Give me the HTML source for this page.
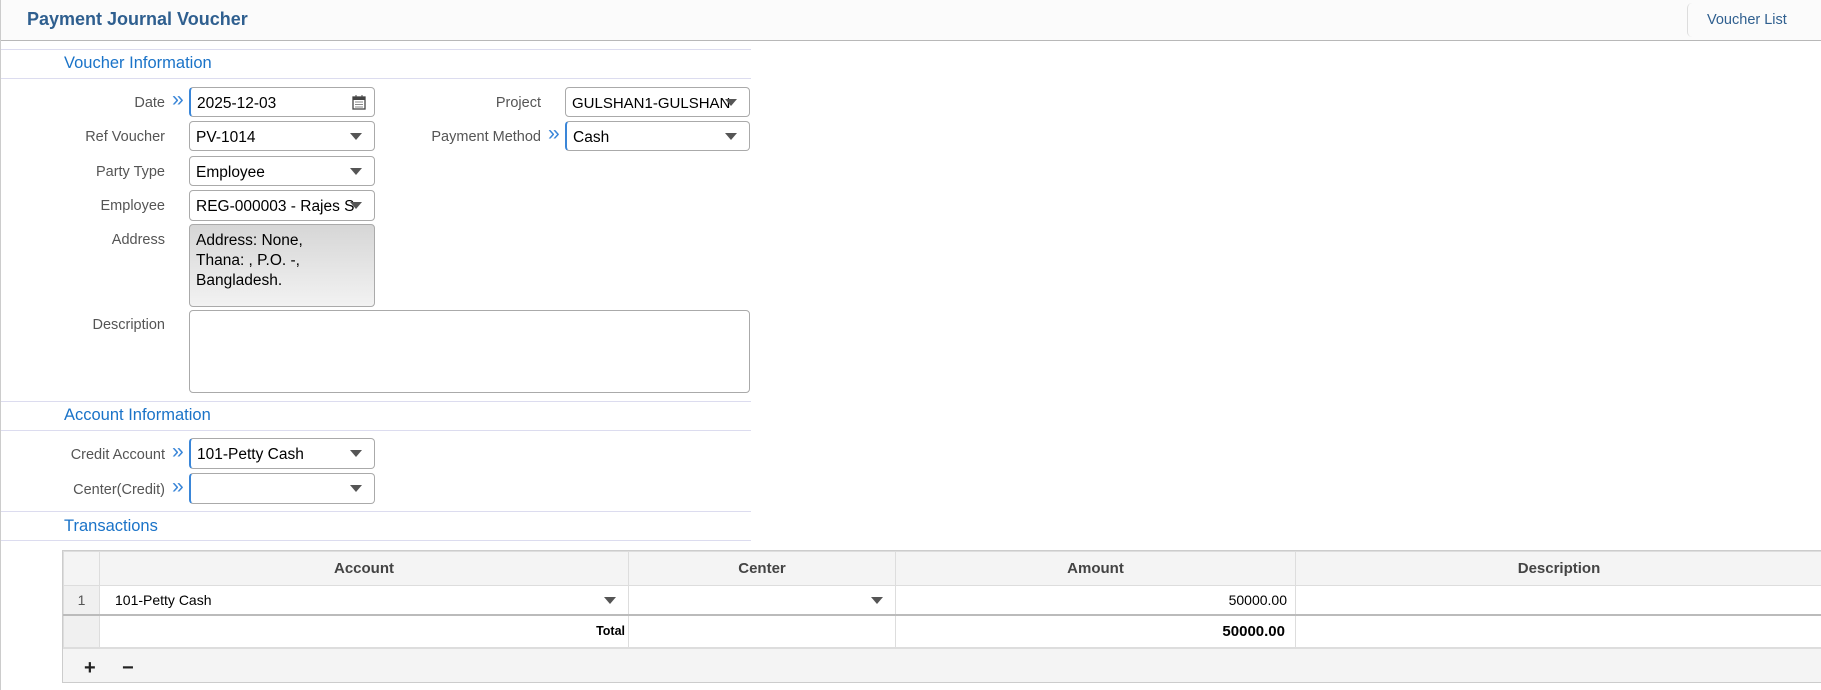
<!DOCTYPE html>
<html><head><meta charset="utf-8"><style>
*{box-sizing:border-box;margin:0;padding:0}
body{width:1821px;height:690px;background:#fff;font-family:"Liberation Sans",sans-serif;position:relative;overflow:hidden;border-left:1px solid #ccc}
.a{position:absolute}
.hdr{left:0;top:0;width:1821px;height:41px;background:#fbfbfb;border-bottom:1px solid #b8b8b8}
.title{left:26px;top:9px;font-size:18px;font-weight:bold;color:#2f5f8f}
.vl{left:1686px;top:3px;width:140px;height:34px;border-left:1px solid #ddd;border-radius:5px 0 0 5px;font-size:14.5px;color:#2f5f8f;padding:9px 0 0 19px}
.line{left:0;width:750px;height:1px;background:#dcdcef}
.sec{left:63px;font-size:16.5px;color:#1a73c8}
.lbl{font-size:14.5px;color:#555;text-align:right;width:160px;left:4px}
.arr{font-size:21px;color:#3a86d8;left:171px;font-weight:300}
.in{border:1px solid #aaa;border-radius:4px;background:#fff;font-size:15.5px;color:#000;padding:2px 6px 0;line-height:28px;white-space:nowrap;overflow:hidden}
.foc{border-left:2px solid #3a86d8}
.dd::after{content:"";position:absolute;right:12px;top:11px;border-left:6px solid transparent;border-right:6px solid transparent;border-top:7px solid #555}
table{border-collapse:collapse;font-size:14px}
td{border:1px solid #ddd;height:29px}
</style></head><body>
<div class="a hdr"></div>
<div class="a title">Payment Journal Voucher</div>
<div class="a vl">Voucher List</div>

<div class="a line" style="top:49px"></div>
<div class="a sec" style="top:54px">Voucher Information</div>
<div class="a line" style="top:78px"></div>

<div class="a lbl" style="top:95px">Date</div><div class="a arr" style="top:88px">»</div>
<div class="a in foc" style="left:188px;top:87px;width:186px;height:30px">2025-12-03
<svg class="a" style="right:8px;top:7px" width="14" height="15" viewBox="0 0 14 15"><rect x="1" y="2" width="12" height="12" fill="none" stroke="#444" stroke-width="1.3"/><rect x="1" y="2" width="12" height="3" fill="#444"/><path d="M4 0v3M10 0v3" stroke="#444"/><path d="M3 7h8M3 9.5h8M3 12h8" stroke="#888"/></svg></div>
<div class="a lbl" style="top:129px">Ref Voucher</div>
<div class="a in dd" style="left:188px;top:121px;width:186px;height:30px">PV-1014</div>
<div class="a lbl" style="top:164px">Party Type</div>
<div class="a in dd" style="left:188px;top:156px;width:186px;height:30px">Employee</div>
<div class="a lbl" style="top:198px">Employee</div>
<div class="a in dd" style="left:188px;top:190px;width:186px;height:31px">REG-000003 - Rajes S</div>
<div class="a lbl" style="top:232px">Address</div>
<div class="a in" style="left:188px;top:224px;width:186px;height:83px;background:linear-gradient(#d6d6d6,#f2f2f2);line-height:20px;padding-top:6px;white-space:normal">Address: None,<br>Thana: , P.O. -,<br>Bangladesh.</div>
<div class="a lbl" style="top:317px">Description</div>
<div class="a in" style="left:188px;top:310px;width:561px;height:83px"></div>

<div class="a lbl" style="left:380px;top:95px">Project</div>
<div class="a in dd" style="left:564px;top:87px;width:185px;height:30px;font-size:15px">GULSHAN1-GULSHAN</div>
<div class="a lbl" style="left:380px;top:129px">Payment Method</div><div class="a arr" style="left:547px;top:122px">»</div>
<div class="a in foc dd" style="left:564px;top:121px;width:185px;height:30px">Cash</div>

<div class="a line" style="top:401px"></div>
<div class="a sec" style="top:406px">Account Information</div>
<div class="a line" style="top:430px"></div>
<div class="a lbl" style="top:447px">Credit Account</div><div class="a arr" style="top:440px">»</div>
<div class="a in foc dd" style="left:188px;top:438px;width:186px;height:31px">101-Petty Cash</div>
<div class="a lbl" style="top:482px">Center(Credit)</div><div class="a arr" style="top:475px">»</div>
<div class="a in foc dd" style="left:188px;top:473px;width:186px;height:31px"></div>

<div class="a line" style="top:511px"></div>
<div class="a sec" style="top:517px">Transactions</div>
<div class="a line" style="top:540px"></div>

<div class="a" style="left:61px;top:550px;width:1761px;height:133px;border:1px solid #ccc;background:#f4f4f4">
<table style="width:1760px">
<tr style="background:#f4f4f4;font-weight:bold;color:#444;font-size:15px"><td style="width:36px;height:34px"></td><td style="width:529px;text-align:center">Account</td><td style="width:267px;text-align:center">Center</td><td style="width:400px;text-align:center">Amount</td><td style="text-align:center">Description</td></tr>
<tr style="background:#fff"><td style="background:#f0f0f0;text-align:center;color:#555;border-bottom:2px solid #bbb">1</td><td style="padding-left:15px;position:relative;border-bottom:2px solid #bbb">101-Petty Cash<span class="a" style="right:12px;top:11px;border-left:6px solid transparent;border-right:6px solid transparent;border-top:7px solid #555"></span></td><td style="position:relative;border-bottom:2px solid #bbb"><span class="a" style="right:12px;top:11px;border-left:6px solid transparent;border-right:6px solid transparent;border-top:7px solid #555"></span></td><td style="text-align:right;padding-right:8px;border-bottom:2px solid #bbb">50000.00</td><td style="border-bottom:2px solid #bbb"></td></tr>
<tr style="background:#fff;font-weight:bold"><td style="background:#f0f0f0;height:33px;border-bottom:2px solid #ddd"></td><td style="text-align:right;font-size:12.5px;padding-right:3px;border-bottom:2px solid #ddd">Total</td><td style="border-bottom:2px solid #ddd"></td><td style="text-align:right;padding-right:10px;font-size:15px;border-bottom:2px solid #ddd">50000.00</td><td style="border-bottom:2px solid #ddd"></td></tr>
</table>
<div class="a" style="left:21px;top:106px;font-size:20px;font-weight:bold;color:#222">+</div>
<div class="a" style="left:59px;top:106px;font-size:20px;font-weight:bold;color:#222">−</div>
</div>
</body></html>
